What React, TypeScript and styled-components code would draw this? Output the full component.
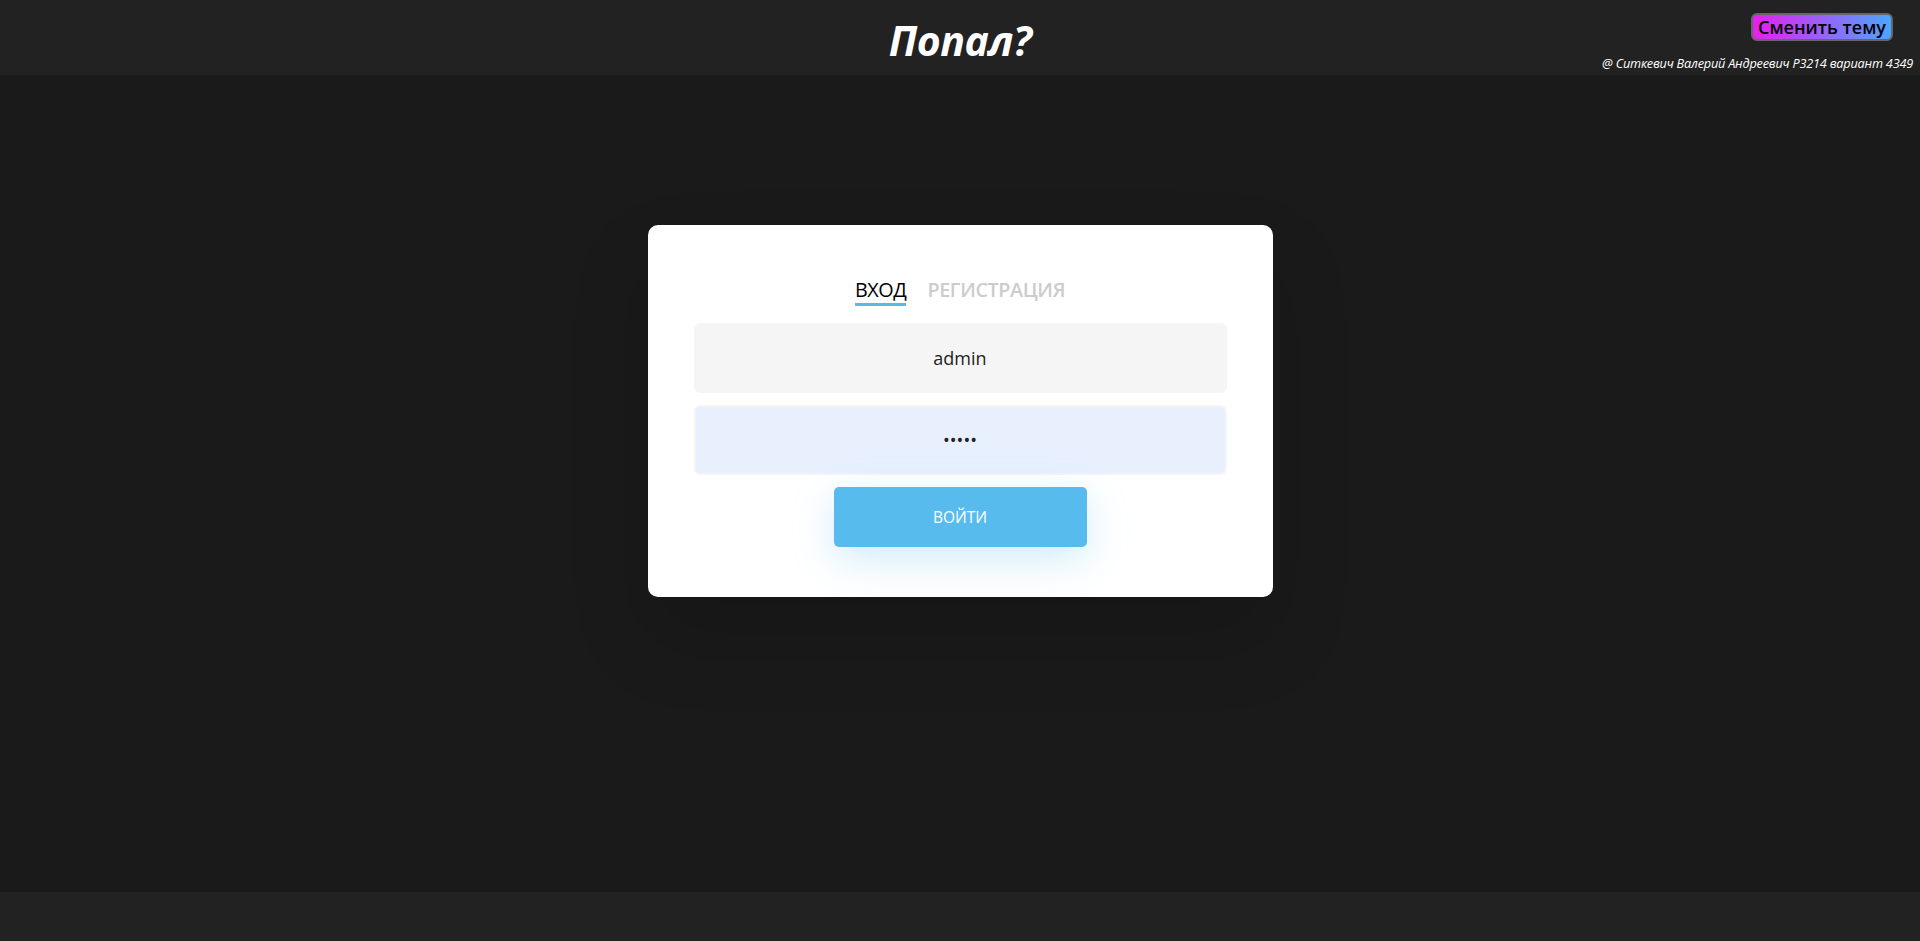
import React from "react";
import styled, { createGlobalStyle } from "styled-components";

const GlobalStyle = createGlobalStyle`
  html, body { margin: 0; padding: 0; }
  body {
    background: #1a1a1a;
    font-family: "Open Sans", "Noto Sans", sans-serif;
  }
  * { box-sizing: border-box; }
`;

const Page = styled.div`
  min-height: 100vh;
  display: flex;
  flex-direction: column;
  background: #1a1a1a;
`;

const Header = styled.header`
  height: 75px;
  background: #222222;
  display: grid;
  grid-template-columns: 1fr auto 1fr;
  align-items: start;
`;

const Title = styled.h1`
  grid-column: 2;
  margin: 0;
  padding-top: 14px;
  font-family: "Open Sans", sans-serif;
  font-style: italic;
  font-weight: 700;
  font-size: 41px;
  line-height: 1.3;
  color: #ffffff;
  letter-spacing: -0.5px;
`;

const RightBlock = styled.div`
  grid-column: 3;
  justify-self: end;
  display: flex;
  flex-direction: column;
  align-items: flex-end;
  padding-top: 13px;
  padding-right: 7px;
`;

const ThemeButton = styled.button`
  height: 28px;
  margin-right: 20px;
  padding: 0 5px;
  border: 2px solid #666666;
  border-radius: 6px;
  background: linear-gradient(90deg, #e61ff0 0%, #4aa6ff 100%);
  color: #000000;
  font-family: "Open Sans", sans-serif;
  font-weight: 600;
  font-size: 18px;
  line-height: 22px;
  cursor: pointer;
`;

const Caption = styled.div`
  margin-top: 14px;
  font-family: "Open Sans", sans-serif;
  font-style: italic;
  font-size: 12.7px;
  line-height: 16px;
  color: #ffffff;
  letter-spacing: -0.2px;
`;

const Main = styled.main`
  flex: 1;
  display: flex;
  justify-content: center;
  align-items: flex-start;
  padding-top: 150px;
`;

const Card = styled.div`
  width: 625px;
  background: #ffffff;
  border-radius: 10px;
  padding: 51px 46px 50px;
  display: flex;
  flex-direction: column;
  align-items: center;
  box-shadow: 0 40px 80px rgba(0, 0, 0, 0.15);
`;

const Tabs = styled.div`
  display: flex;
  gap: 21px;
  margin-bottom: 17px;
`;

const Tab = styled.span<{ $active?: boolean }>`
  font-family: "Open Sans", sans-serif;
  font-size: 19.8px;
  line-height: 27px;
  font-weight: ${(p) => (p.$active ? 400 : 600)};
  color: ${(p) => (p.$active ? "#000000" : "#cccccc")};
  border-bottom: 3px solid ${(p) => (p.$active ? "#5bb8e8" : "transparent")};
  letter-spacing: -0.4px;
`;

const Input = styled.input<{ $autofill?: boolean }>`
  width: 100%;
  height: 70px;
  margin-bottom: 12px;
  border: 2px solid #f5f5f5;
  border-radius: 6px;
  background: ${(p) => (p.$autofill ? "#e8f0fe" : "#f5f5f5")};
  text-align: center;
  font-family: "Open Sans", sans-serif;
  font-size: 18px;
  color: #222222;
  outline: none;
`;

const Submit = styled.button`
  width: 253px;
  height: 60px;
  border: none;
  border-radius: 5px;
  background: #58bbed;
  color: #ffffff;
  font-family: "Open Sans", sans-serif;
  font-size: 15.5px;
  box-shadow: 0 12px 40px rgba(88, 187, 237, 0.28);
  cursor: pointer;
`;

const Footer = styled.footer`
  height: 49px;
  background: #222222;
`;

export default function App() {
  return (
    <>
      <GlobalStyle />
      <Page>
        <Header>
          <Title>Попал?</Title>
          <RightBlock>
            <ThemeButton>Сменить тему</ThemeButton>
            <Caption>@ Ситкевич Валерий Андреевич P3214 вариант 4349</Caption>
          </RightBlock>
        </Header>
        <Main>
          <Card>
            <Tabs>
              <Tab $active>ВХОД</Tab>
              <Tab>РЕГИСТРАЦИЯ</Tab>
            </Tabs>
            <Input defaultValue="admin" />
            <Input type="password" defaultValue="admin" $autofill />
            <Submit>ВОЙТИ</Submit>
          </Card>
        </Main>
        <Footer />
      </Page>
    </>
  );
}
